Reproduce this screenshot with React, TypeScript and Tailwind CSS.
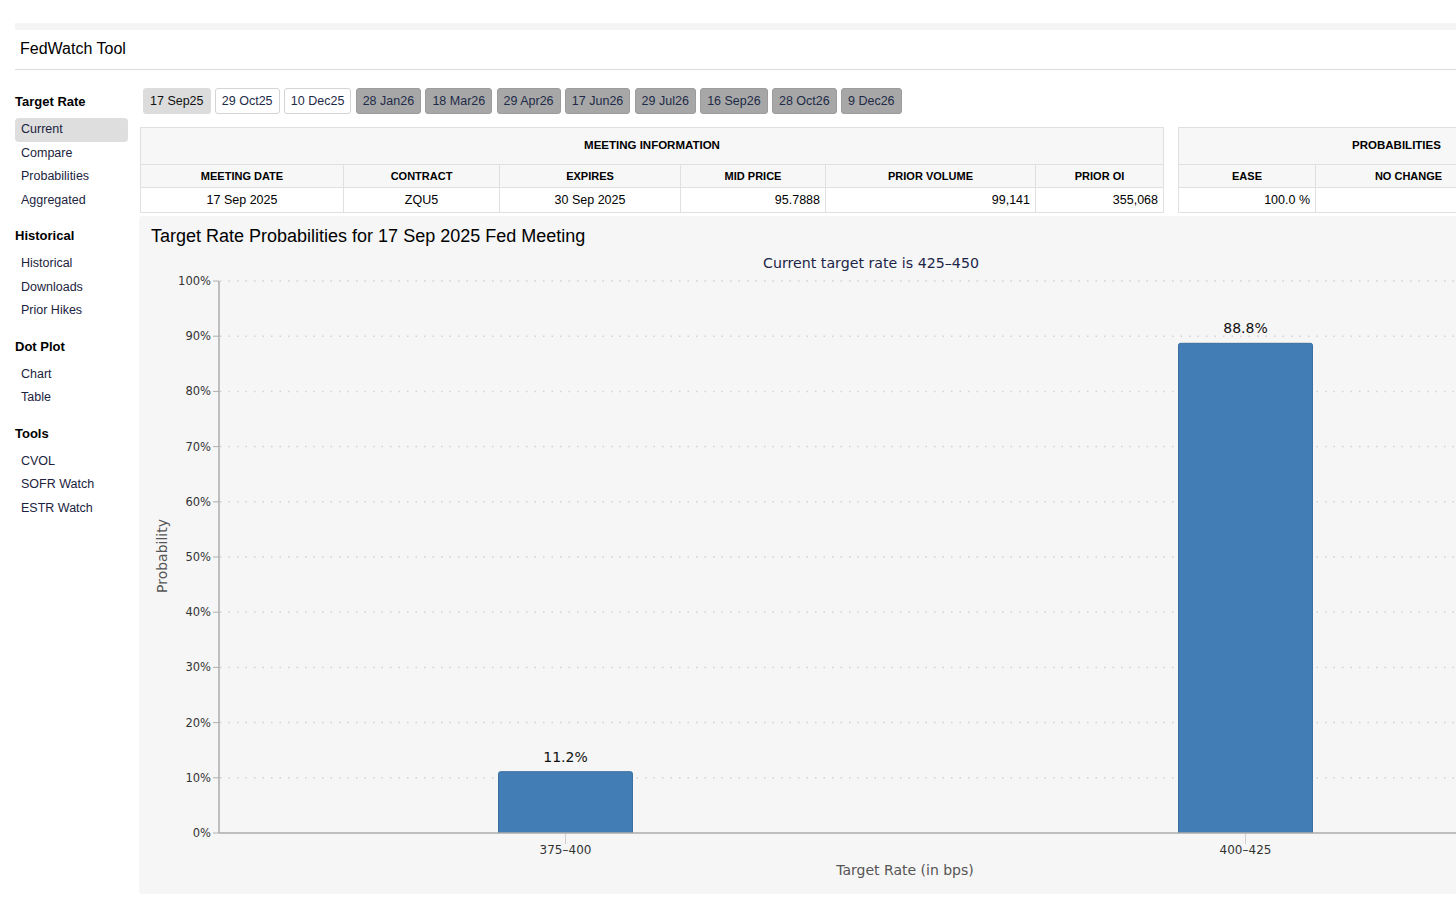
import React from "react";

const dates = [
  { t: "17 Sep25", k: "active" },
  { t: "29 Oct25", k: "white" },
  { t: "10 Dec25", k: "white" },
  { t: "28 Jan26", k: "gray" },
  { t: "18 Mar26", k: "gray" },
  { t: "29 Apr26", k: "gray" },
  { t: "17 Jun26", k: "gray" },
  { t: "29 Jul26", k: "gray" },
  { t: "16 Sep26", k: "gray" },
  { t: "28 Oct26", k: "gray" },
  { t: "9 Dec26", k: "gray" },
];

const sections = [
  { h: "Target Rate", items: ["Current", "Compare", "Probabilities", "Aggregated"] },
  { h: "Historical", items: ["Historical", "Downloads", "Prior Hikes"] },
  { h: "Dot Plot", items: ["Chart", "Table"] },
  { h: "Tools", items: ["CVOL", "SOFR Watch", "ESTR Watch"] },
];

function Sidebar() {
  return (
    <div className="w-[113px] shrink-0 pt-[24px] flex flex-col gap-[16px]">
      {sections.map((s) => (
        <div key={s.h} className="flex flex-col">
          <div className="h-[16px] leading-[16px] text-[13px] font-bold text-black">{s.h}</div>
          <div className="mt-[8px] flex flex-col">
            {s.items.map((it, i) => (
              <div
                key={it}
                className={
                  "h-[23.5px] flex items-center pl-[6px] text-[12.5px] text-[#1b2340] rounded-[4px] " +
                  (s.h === "Target Rate" && i === 0 ? "bg-[#dedede]" : "")
                }
              >
                {it}
              </div>
            ))}
          </div>
        </div>
      ))}
    </div>
  );
}

function DateButtons() {
  return (
    <div className="h-[26px] ml-[4px] flex gap-[4.3px]">
      {dates.map((d) => (
        <div
          key={d.t}
          className={
            "h-[26px] px-[6px] flex items-center text-[12.5px] rounded-[3px] border " +
            (d.k === "active"
              ? "bg-[#dcdcdc] border-[#dcdcdc] text-[#111]"
              : d.k === "white"
              ? "bg-white border-[#d4d4d4] text-[#1e2b47]"
              : "bg-[#a7a7a7] border-[#9c9c9c] text-[#1e2b47]")
          }
        >
          {d.t}
        </div>
      ))}
    </div>
  );
}

const th = "border border-[#e0e0e0] bg-[#f7f7f7] text-[11px] font-bold text-black text-center h-[23px] p-0 whitespace-nowrap";
const td = "border border-[#e0e0e0] bg-white text-[12.5px] text-black h-[25px] py-0";

function Tables() {
  return (
    <div className="ml-[1px] flex gap-[14px] items-start">
      <table className="border-collapse table-fixed w-[1023px] shrink-0">
        <colgroup>
          <col className="w-[203px]" />
          <col className="w-[156px]" />
          <col className="w-[181px]" />
          <col className="w-[145px]" />
          <col className="w-[210px]" />
          <col className="w-[128px]" />
        </colgroup>
        <thead>
          <tr>
            <th colSpan={6} className={th + " h-[37px] !text-[11.5px]"}>MEETING INFORMATION</th>
          </tr>
          <tr>
            <th className={th}>MEETING DATE</th>
            <th className={th}>CONTRACT</th>
            <th className={th}>EXPIRES</th>
            <th className={th}>MID PRICE</th>
            <th className={th}>PRIOR VOLUME</th>
            <th className={th}>PRIOR OI</th>
          </tr>
        </thead>
        <tbody>
          <tr>
            <td className={td + " text-center"}>17 Sep 2025</td>
            <td className={td + " text-center"}>ZQU5</td>
            <td className={td + " text-center"}>30 Sep 2025</td>
            <td className={td + " text-right pr-[5px]"}>95.7888</td>
            <td className={td + " text-right pr-[5px]"}>99,141</td>
            <td className={td + " text-right pr-[5px]"}>355,068</td>
          </tr>
        </tbody>
      </table>
      <table className="border-collapse table-fixed w-[436px] shrink-0">
        <colgroup>
          <col className="w-[137px]" />
          <col className="w-[186px]" />
          <col className="w-[113px]" />
        </colgroup>
        <thead>
          <tr>
            <th colSpan={3} className={th + " h-[37px] !text-[11.5px]"}>PROBABILITIES</th>
          </tr>
          <tr>
            <th className={th}>EASE</th>
            <th className={th}>NO CHANGE</th>
            <th className={th}>HIKE</th>
          </tr>
        </thead>
        <tbody>
          <tr>
            <td className={td + " text-right pr-[5px]"}>100.0 %</td>
            <td className={td + " text-right pr-[5px]"}></td>
            <td className={td + " text-right pr-[5px]"}></td>
          </tr>
        </tbody>
      </table>
    </div>
  );
}

function Chart() {
  const font = "'DejaVu Sans', Verdana, sans-serif";
  const y0 = 587;
  const step = 55.2;
  const grid = Array.from({ length: 11 }, (_, i) => i);
  const bars = [
    { x: 359, w: 135, v: 11.2, label: "375–400", cx: 426.5 },
    { x: 1039, w: 135, v: 88.8, label: "400–425", cx: 1106.5 },
  ];
  return (
    <svg width="1500" height="648" className="block" style={{ fontFamily: font }}>
      <text x="732" y="22" textAnchor="middle" fontSize="14.2" fill="#1c2548">
        Current target rate is 425–450
      </text>
      {grid.map((i) => {
        const y = y0 - i * step;
        return (
          <g key={i}>
            {i > 0 && (
              <line x1="81" x2="1500" y1={y} y2={y} stroke="#d2d2d2" strokeWidth="1.5" strokeDasharray="1.5 7" />
            )}
            <line x1="74" x2="80" y1={y} y2={y} stroke="#b0b0b0" strokeWidth="1" />
            <text x="72" y={y + 4} textAnchor="end" fontSize="11.5" fill="#333">
              {i * 10}%
            </text>
          </g>
        );
      })}
      {bars.map((b) => {
        const top = y0 - b.v * 5.52;
        return (
          <g key={b.label}>
            <path
              d={`M${b.x + 0.5},${y0} L${b.x + 0.5},${top + 2.5} Q${b.x + 0.5},${top + 0.5} ${b.x + 2.5},${top + 0.5} L${b.x + b.w - 2.5},${top + 0.5} Q${b.x + b.w - 0.5},${top + 0.5} ${b.x + b.w - 0.5},${top + 2.5} L${b.x + b.w - 0.5},${y0}`}
              fill="#427db5"
              stroke="#3a6f9f"
              strokeWidth="1"
            />
            <text x={b.cx} y={top - 9.5} textAnchor="middle" fontSize="14" fill="#111">
              {b.v}%
            </text>
            <line x1={b.cx} x2={b.cx} y1={y0} y2={y0 + 11} stroke="#d0d0d0" strokeWidth="1" />
            <text x={b.cx} y={y0 + 21} textAnchor="middle" fontSize="12" fill="#333">
              {b.label}
            </text>
          </g>
        );
      })}
      <line x1="80" x2="80" y1="35" y2={y0} stroke="#ababab" strokeWidth="1.5" />
      <line x1="80" x2="1500" y1={y0} y2={y0} stroke="#ababab" strokeWidth="1.5" />
      <text x="766" y="629" textAnchor="middle" fontSize="14" fill="#555">
        Target Rate (in bps)
      </text>
      <text
        x="24"
        y="310"
        textAnchor="middle"
        fontSize="14"
        fill="#555"
        transform="rotate(-90 24 310)"
        dominantBaseline="middle"
      >
        Probability
      </text>
    </svg>
  );
}

export default function App() {
  return (
    <div
      className="w-[1456px] h-[898px] overflow-hidden bg-white text-black"
      style={{ fontFamily: "'Liberation Sans', Arial, sans-serif" }}
    >
      <div className="pt-[23px] pl-[15px]">
        <div className="w-[1600px]">
          <div className="h-[7px] bg-[#f4f4f4]" />
          <div className="h-[40px] border-b border-[#dcdcdc] flex items-center pl-[5px] pb-[2px] text-[16px] text-black">
            FedWatch Tool
          </div>
          <div className="flex">
            <Sidebar />
            <div className="ml-[11px] pt-[18px] flex flex-col">
              <DateButtons />
              <div className="mt-[13px]">
                <Tables />
              </div>
              <div className="mt-[3px] h-[678px] bg-[#f6f6f6] rounded-[3px] overflow-hidden">
                <div className="pl-[12px] pt-[10px] h-[30px] text-[18px] leading-[20px] text-black">
                  Target Rate Probabilities for 17 Sep 2025 Fed Meeting
                </div>
                <Chart />
              </div>
            </div>
          </div>
        </div>
      </div>
    </div>
  );
}
